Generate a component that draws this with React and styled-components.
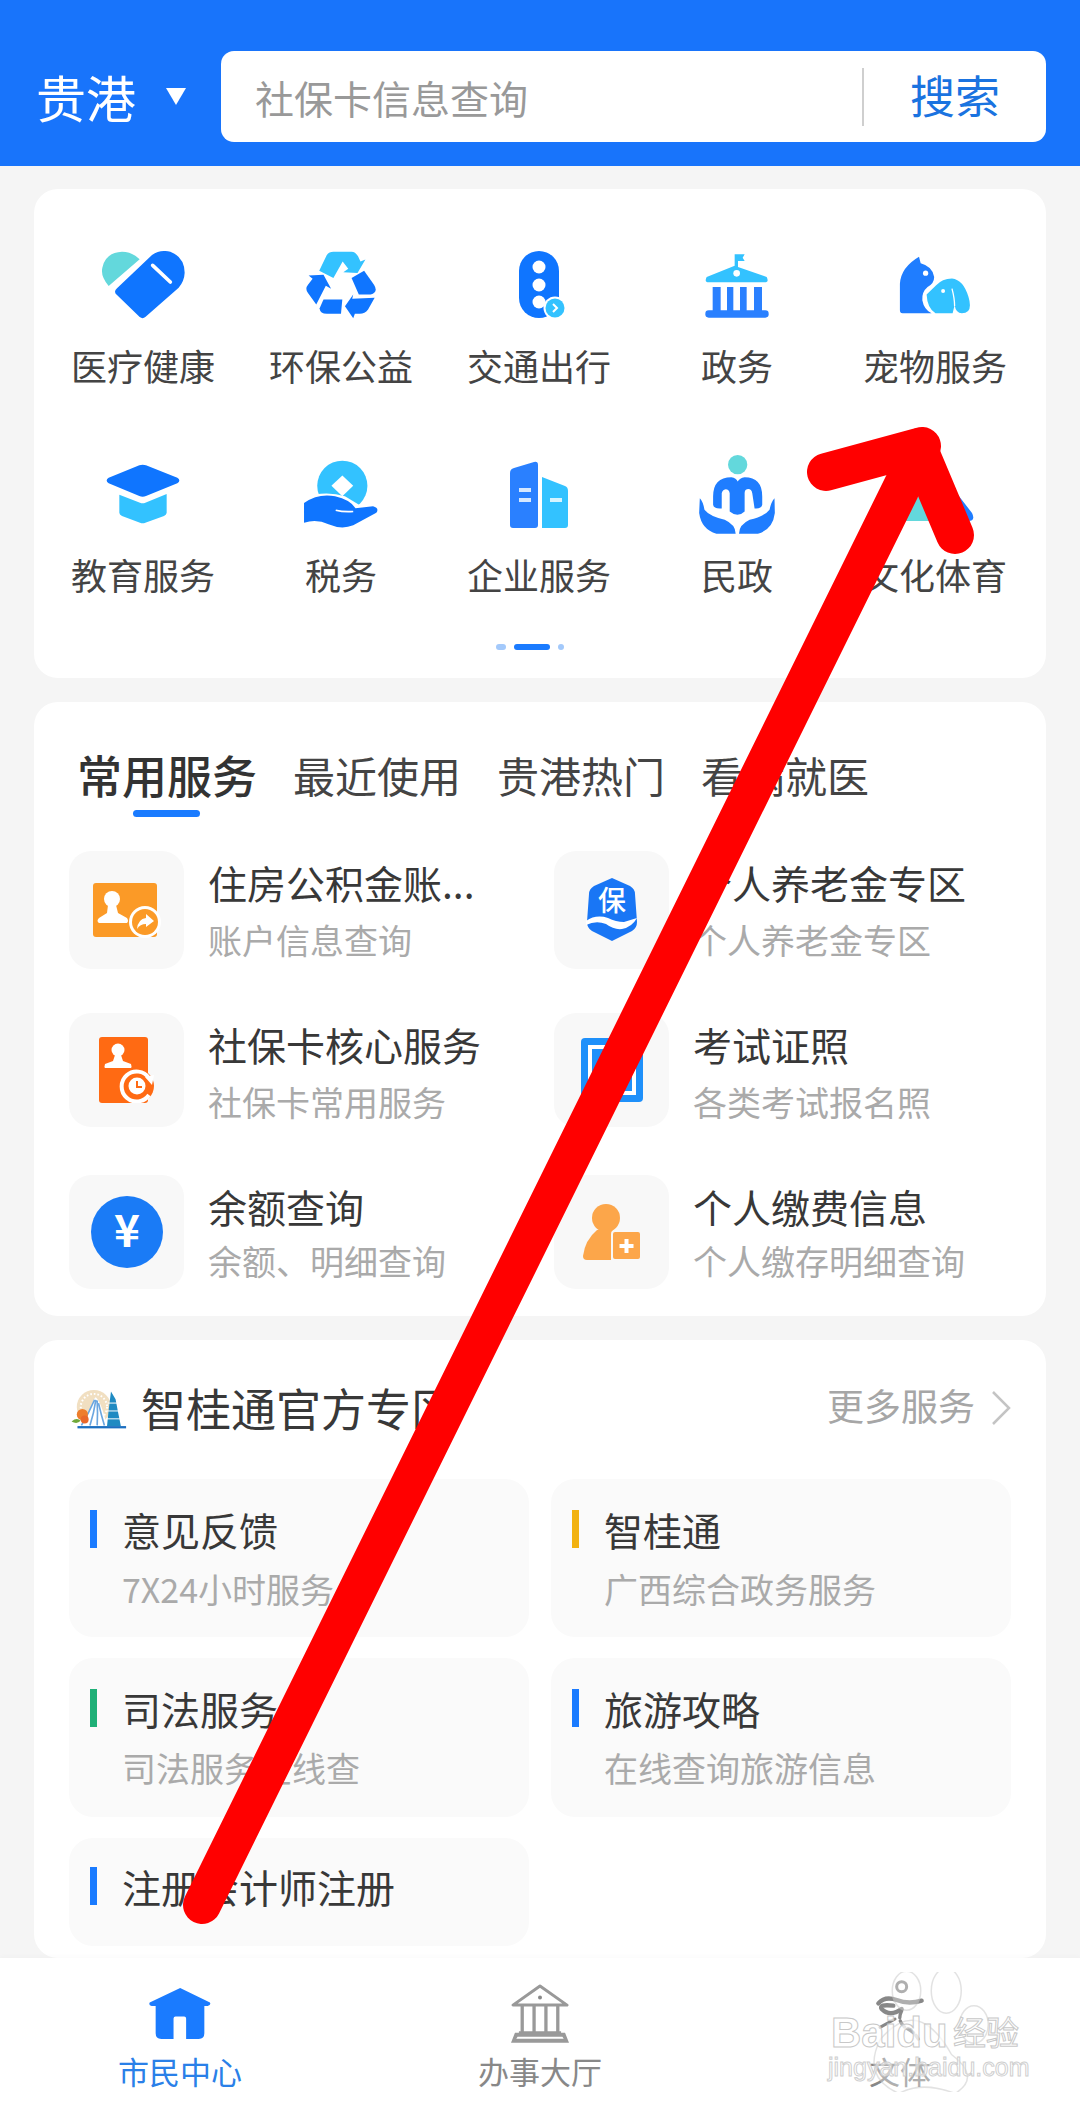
import React from 'react'
import styled, { createGlobalStyle } from 'styled-components'

const FONT = '"Noto Sans CJK SC", "Noto Sans", sans-serif'
const BLUE = '#0f75ff'
const SKY = '#33c2ff'
const TEAL = '#63d8dc'

const GlobalStyle = createGlobalStyle`
  html, body { margin: 0; padding: 0; background: #f5f5f5; }
  body { font-family: ${FONT}; }
  * { box-sizing: border-box; }
`

const HeartIcon = () => (
  <svg width="84" height="68" viewBox="142 60 252 204">
    <path fill={TEAL} d="M165 165 Q140 135 146 110 Q155 65 205 62 Q235 62 258 85 Z" />
    <path fill={BLUE} d="M190 172 L295 72 Q320 55 350 62 Q392 78 393 125 Q392 150 375 170 L275 258 Q267 265 258 258 L190 192 Q178 182 190 172 Z" />
    <path stroke="#fff" strokeWidth="11" strokeLinecap="round" d="M297 103 L350 153" />
  </svg>
)

const RecycleIcon = () => (
  <svg width="72" height="68" viewBox="760 58 216 206">
    <path fill={SKY} d="M802 118 L825 70 Q832 60 845 60 L900 60 Q912 60 920 75 L927 90 L942 84 L918 125 L875 122 L890 112 L873 90 L845 140 Z" />
    <path fill={BLUE} d="M770 132 L815 130 L838 172 L822 163 L793 220 L768 185 Q758 172 768 160 L782 142 Z" />
    <path fill={BLUE} d="M938 118 L968 160 Q982 182 958 190 L922 190 L900 140 Z" />
    <path fill={BLUE} d="M815 205 L872 205 L868 248 L825 248 Q805 248 803 232 Z" />
    <path fill={BLUE} d="M905 190 L902 203 L970 200 L950 235 Q940 248 925 248 L910 248 L905 262 L880 225 Z" />
  </svg>
)

const TrafficIcon = () => (
  <svg width="56" height="68" viewBox="0 0 56 68">
    <rect x="8" y="0" width="40" height="67" rx="20" fill={BLUE} />
    <circle cx="28" cy="16" r="6.5" fill="#fff" />
    <circle cx="28" cy="34" r="6.5" fill="#fff" />
    <circle cx="28" cy="51" r="6.5" fill="#fff" />
    <circle cx="44" cy="57" r="11.5" fill="#fff" />
    <circle cx="44" cy="57" r="9.5" fill={SKY} />
    <path d="M42 53 L46 57 L42 61" fill="none" stroke="#fff" strokeWidth="2" />
  </svg>
)

const GovIcon = () => (
  <svg width="64" height="65" viewBox="138 66 190 195">
    <path fill={SKY} d="M226 70 L256 70 L250 80 L256 90 L236 90 L236 108 L322 138 Q330 154 316 154 L148 154 Q134 154 142 138 L226 104 Z" />
    <circle cx="232" cy="127" r="10" fill="#fff" />
    <path fill="#2a80ff" d="M160 168 H184 V240 H160 Z M203 168 H222 V240 H203 Z M242 168 H262 V240 H242 Z M284 168 H308 V240 H284 Z" />
    <rect x="138" y="238" width="190" height="22" rx="10" fill="#2a80ff" />
  </svg>
)

const PetIcon = () => (
  <svg width="73" height="58" viewBox="720 66 220 176">
    <path fill="#1f7dff" d="M780 68 L785 88 Q822 98 826 130 Q826 150 806 160 Q788 175 790 200 Q795 228 818 240 L730 240 Q722 240 722 230 L722 150 Q725 100 780 68 Z" />
    <circle cx="800" cy="118" r="8" fill="#fff" />
    <path fill={SKY} d="M803 183 L832 155 Q850 134 880 134 Q915 138 930 190 Q945 240 910 240 Q892 240 888 215 L882 240 L830 240 Q805 225 803 183 Z" />
    <circle cx="853" cy="172" r="6" fill="#fff" />
    <path stroke="#fff" strokeWidth="4" fill="none" d="M880 165 Q888 195 888 218" />
  </svg>
)

const EduIcon = () => (
  <svg width="74" height="60" viewBox="160 64 222 180">
    <path fill={SKY} d="M200 156 L262 180 Q270 183 278 180 L342 154 L342 210 Q342 216 334 220 L278 240 Q270 244 262 240 L208 220 Q200 216 200 210 Z" />
    <path fill={BLUE} d="M260 68 Q270 64 280 68 L374 105 Q386 113 374 122 L280 160 Q270 164 260 160 L168 122 Q156 113 168 105 Z" />
  </svg>
)

const TaxIcon = () => (
  <svg width="76" height="68" viewBox="754 50 228 206">
    <circle cx="872" cy="128" r="76" fill={SKY} />
    <path fill="#fff" d="M872 97 L905 128 L872 160 L839 128 Z" />
    <path fill="#fff" d="M745 165 Q820 140 880 160 L930 190 L960 260 L745 260 Z" />
    <path fill={BLUE} d="M756 180 Q800 150 850 160 Q895 170 912 196 L965 190 Q985 195 975 210 L905 248 Q870 262 830 245 Q795 228 756 240 Z" />
    <path fill="none" stroke="#fff" strokeWidth="5" d="M852 202 Q875 208 905 206" />
  </svg>
)

const BuildingIcon = () => (
  <svg width="58" height="67" viewBox="0 0 58 67">
    <path fill="#2a80ff" d="M0 12 Q0 8 4 7 L24 1 Q28 0 28 4 L28 64 Q28 67 25 67 L3 67 Q0 67 0 64 Z" />
    <path fill={SKY} d="M32 16 L55 25 Q58 26 58 30 L58 64 Q58 67 55 67 L32 67 Z" />
    <rect x="9" y="27" width="12" height="4" fill="#d6e8ff" />
    <rect x="9" y="37" width="12" height="4" fill="#d6e8ff" />
    <rect x="40" y="37" width="12" height="4" fill="#d6f4ff" />
  </svg>
)

const CivilIcon = () => (
  <svg width="76" height="79" viewBox="118 665 228 238">
    <circle cx="234" cy="694" r="29" fill={TEAL} />
    <path fill="#1f7dff" d="M160 790 Q160 732 215 732 Q230 734 234 745 Q240 734 255 732 Q308 732 308 790 L308 815 Q305 828 285 826 L278 780 Q275 765 262 768 Q255 770 255 780 L255 835 Q234 855 210 835 L210 780 Q208 768 198 768 Q188 770 186 780 L186 826 Q162 828 160 815 Z" />
    <path fill="#1f7dff" d="M120 795 Q130 805 134 830 Q150 850 195 860 Q228 875 228 902 L170 902 Q125 890 118 840 Z" />
    <path fill="#1f7dff" d="M345 795 Q335 805 330 830 Q315 850 270 860 Q238 875 238 902 L295 902 Q340 890 346 840 Z" />
  </svg>
)

const CultureIcon = () => (
  <svg width="78" height="58" viewBox="0 0 78 58">
    <path fill={TEAL} d="M30 20 L46 56 L6 56 Z" />
    <path fill="#1f7dff" d="M30 4 Q36 -2 42 4 L76 48 Q80 56 72 56 L38 56 L48 46 L26 12 Z" />
  </svg>
)

const FundIcon = () => (
  <svg width="68" height="55" viewBox="0 0 68 55">
    <rect x="0" y="0" width="64" height="54" rx="3" fill="#fb9a27" />
    <circle cx="19" cy="16" r="8" fill="#fff" />
    <path fill="#fff" d="M15 22 H23 L25 30 L34 35 Q36 38 34 40 H6 Q3 38 6 35 L14 30 Z" />
    <circle cx="52" cy="39" r="16" fill="#fff" />
    <circle cx="52" cy="39" r="13" fill="#fb9a27" />
    <path fill="#fff" d="M53 31 L61 38 L53 44 V41 Q47 41 44 46 Q45 36 53 35 Z" />
  </svg>
)

const PensionIcon = () => (
  <svg width="52" height="64" viewBox="0 0 52 64">
    <path fill="#1976f5" d="M26 0 L44 8 Q49 11 49 16 L51 44 Q51 50 46 53 L26 63 L6 53 Q1 50 1 44 L3 16 Q3 11 8 8 Z" />
    <text x="26" y="33" textAnchor="middle" fontSize="28" fontWeight="500" fill="#fff" fontFamily={FONT}>保</text>
    <path fill="#fff" d="M0 43 Q10 36 22 40 Q30 44 38 44 L51 40 Q46 49 36 51 Q28 52 20 46 Q10 42 0 47 Z" />
  </svg>
)

const CardIcon = () => (
  <svg width="56" height="66" viewBox="0 0 56 66">
    <rect x="0" y="0" width="49" height="66" rx="3" fill="#ff6a13" />
    <circle cx="19" cy="13" r="6.5" fill="#fff" />
    <path fill="#fff" d="M16 18 H22 L24 24 L32 27 Q33 30 32 31 H6 Q5 30 6 27 L14 24 Z" />
    <circle cx="38" cy="49" r="17" fill="#ff6a13" />
    <path fill="none" stroke="#fff" strokeWidth="4" d="M50 41 A15 15 0 1 0 50 58" />
    <circle cx="38" cy="49" r="8.5" fill="#fff" />
    <path fill="none" stroke="#ff6a13" strokeWidth="2" d="M38 44 V50 H43" />
    <path fill="#fff" d="M46 40 L55 38 L53 48 Z" />
  </svg>
)

const ExamIcon = () => (
  <svg width="62" height="64" viewBox="0 0 62 64">
    <rect x="0" y="0" width="62" height="64" rx="4" fill="#1e90fa" />
    <rect x="9" y="9" width="44" height="46" fill="none" stroke="#fff" strokeWidth="4" />
  </svg>
)

const YenIcon = () => (
  <svg width="72" height="76" viewBox="0 0 72 76">
    <circle cx="36" cy="38" r="36" fill="#1a7bf6" />
    <text x="36" y="53" textAnchor="middle" fontSize="44" fontWeight="700" fill="#fff" fontFamily={FONT}>¥</text>
  </svg>
)

const PayIcon = () => (
  <svg width="58" height="57" viewBox="0 0 58 57">
    <circle cx="23" cy="14" r="14" fill="#fca64a" />
    <path fill="#fca64a" d="M14 26 H30 L28 56 H4 Q0 56 0 52 Q2 36 14 26 Z" />
    <rect x="29" y="27" width="29" height="29" rx="3" fill="#fca64a" stroke="#f8f8f8" strokeWidth="2" />
    <path stroke="#fff" strokeWidth="4" d="M43.5 35 V49 M36.5 42 H50.5" />
  </svg>
)

const SpotLogo = () => (
  <svg width="58" height="46" viewBox="25 25 175 140">
    <circle cx="100" cy="92" r="52" fill="#f1dfc1" />
    <circle cx="100" cy="92" r="40" fill="none" stroke="#fff" strokeWidth="6" strokeDasharray="5 6" />
    <path fill="#fff" d="M70 150 Q100 60 106 62 Q124 80 140 150 Z" />
    <path fill="none" stroke="#6ba6e0" strokeWidth="5" d="M102 70 Q85 110 62 148 M106 70 Q100 110 88 148 M110 72 Q112 110 110 148 M114 80 Q122 115 132 148" />
    <path fill="#1f8ac2" d="M152 45 L166 68 L174 110 L182 150 L140 150 L145 100 Z" />
    <path stroke="#fff" strokeWidth="3" d="M142 80 H172 M140 104 H176 M138 128 H180" />
    <rect x="50" y="150" width="148" height="7" fill="#1c6fc0" />
    <circle cx="65" cy="115" r="17" fill="#ee7d2c" />
    <circle cx="72" cy="130" r="12" fill="#e9682a" />
    <path fill="#70a83a" d="M32 136 Q48 122 60 134 Q48 146 32 136 Z" />
  </svg>
)

const HomeIcon = () => (
  <svg width="62" height="51" viewBox="28 38 187 154">
    <path fill="#1a7bff" d="M122 38 L212 82 Q216 90 205 92 L195 92 L195 175 Q195 192 178 192 L140 192 L140 130 Q140 124 134 124 L108 124 Q102 124 102 130 L102 192 L65 192 Q48 192 48 175 L48 92 L36 92 Q26 90 30 82 Z" />
  </svg>
)

const HallIcon = () => (
  <svg width="58" height="59" viewBox="1112 25 176 177">
    <path fill="none" stroke="#999" strokeWidth="9" strokeLinejoin="round" d="M1200 30 L1282 88 H1118 Z" />
    <circle cx="1200" cy="65" r="6" fill="#888" />
    <path fill="none" stroke="#999" strokeWidth="10" d="M1146 88 V172 M1182 88 V172 M1218 88 V172 M1254 88 V172 M1136 172 H1264" />
    <path fill="#999" d="M1124 172 H1276 L1288 202 H1112 Z M1132 184 L1128 190 H1272 L1268 184 Z" fillRule="evenodd" />
  </svg>
)

const RunnerIcon = () => (
  <svg width="50" height="68" viewBox="160 35 150 204">
    <circle cx="240" cy="58" r="15" fill="none" stroke="#888" strokeWidth="9" />
    <path fill="none" stroke="#888" strokeWidth="13" strokeLinecap="round" d="M170 108 Q190 85 225 98 Q260 112 300 100" />
    <path fill="none" stroke="#888" strokeWidth="13" strokeLinecap="round" d="M215 115 Q170 110 180 125 Q205 150 240 125" />
    <path fill="none" stroke="#888" strokeWidth="10" strokeLinecap="round" strokeDasharray="22 10" d="M240 130 Q225 160 250 180 Q280 195 290 215" />
    <path fill="none" stroke="#888" strokeWidth="9" strokeLinecap="round" d="M220 155 L175 180" />
  </svg>
)

const Paw = () => (
  <svg width="130" height="120" viewBox="230 60 170 160">
    <g fill="rgba(255,255,255,.6)" stroke="#ccc" strokeWidth="2">
      <ellipse cx="285" cy="85" rx="19" ry="26" />
      <ellipse cx="338" cy="85" rx="20" ry="30" />
      <ellipse cx="375" cy="130" rx="19" ry="25" />
      <path d="M250 150 Q300 90 345 170 Q385 200 350 222 Q305 205 275 222 Q225 200 250 150 Z" />
    </g>
  </svg>
)

const topServices = [
  { label: '医疗健康', icon: <HeartIcon /> },
  { label: '环保公益', icon: <RecycleIcon /> },
  { label: '交通出行', icon: <TrafficIcon /> },
  { label: '政务', icon: <GovIcon /> },
  { label: '宠物服务', icon: <PetIcon /> },
  { label: '教育服务', icon: <EduIcon /> },
  { label: '税务', icon: <TaxIcon /> },
  { label: '企业服务', icon: <BuildingIcon /> },
  { label: '民政', icon: <CivilIcon /> },
  { label: '文化体育', icon: <CultureIcon /> },
]

const commonServices = [
  { title: '住房公积金账...', sub: '账户信息查询', icon: <FundIcon />, tall: true },
  { title: '个人养老金专区', sub: '个人养老金专区', icon: <PensionIcon />, tall: true },
  { title: '社保卡核心服务', sub: '社保卡常用服务', icon: <CardIcon /> },
  { title: '考试证照', sub: '各类考试报名照', icon: <ExamIcon /> },
  { title: '余额查询', sub: '余额、明细查询', icon: <YenIcon />, tight: true },
  { title: '个人缴费信息', sub: '个人缴存明细查询', icon: <PayIcon />, tight: true },
]

const zoneItems = [
  { title: '意见反馈', sub: '7X24小时服务', bar: '#1a7bff' },
  { title: '智桂通', sub: '广西综合政务服务', bar: '#f2b211' },
  { title: '司法服务', sub: '司法服务在线查', bar: '#1fb077' },
  { title: '旅游攻略', sub: '在线查询旅游信息', bar: '#1a7bff' },
  { title: '注册会计师注册', bar: '#1a7bff' },
]

const navItems = [
  { label: '市民中心', icon: <HomeIcon />, active: true },
  { label: '办事大厅', icon: <HallIcon /> },
  { label: '文体', icon: <RunnerIcon /> },
]

export default function App() {
  return (
    <Page>
      <GlobalStyle />
      <Header>
        <City>贵港</City>
        <Caret />
        <SearchBox>
          <Placeholder>社保卡信息查询</Placeholder>
          <SearchButton>搜索</SearchButton>
        </SearchBox>
      </Header>

      <Main>
        <TopCard>
          <TopGrid>
            {topServices.map((item) => (
              <TopItem key={item.label}>
                <TopIconSlot>{item.icon}</TopIconSlot>
                <TopLabel>{item.label}</TopLabel>
              </TopItem>
            ))}
          </TopGrid>
          <Dots>
            <Dot />
            <Dot $active />
            <Dot $thin />
          </Dots>
        </TopCard>

        <CommonCard>
          <Tabs>
            <Tab $active>常用服务</Tab>
            <Tab>最近使用</Tab>
            <Tab>贵港热门</Tab>
            <Tab>看病就医</Tab>
          </Tabs>
          <CommonGrid>
            {commonServices.map((item) => (
              <CommonRow key={item.title}>
                <IconTile $tall={item.tall}>{item.icon}</IconTile>
                <CommonText $tight={item.tight}>
                  <CommonTitle>{item.title}</CommonTitle>
                  <CommonSub>{item.sub}</CommonSub>
                </CommonText>
              </CommonRow>
            ))}
          </CommonGrid>
        </CommonCard>

        <ZoneCard>
          <ZoneHead>
            <SpotLogo />
            <ZoneTitle>智桂通官方专区</ZoneTitle>
            <More>更多服务</More>
            <Chevron viewBox="0 0 20 34" width="20" height="34">
              <path d="M2 1 L18 17 L2 33" fill="none" stroke="#c4c4c4" strokeWidth="2.5" />
            </Chevron>
          </ZoneHead>
          <ZoneGrid>
            {zoneItems.map((item) => (
              <ZoneTile key={item.title} $short={!item.sub}>
                <ZoneTitleRow>
                  <ZoneBar $color={item.bar} />
                  <ZoneName>{item.title}</ZoneName>
                </ZoneTitleRow>
                {item.sub && <ZoneSub>{item.sub}</ZoneSub>}
              </ZoneTile>
            ))}
          </ZoneGrid>
        </ZoneCard>
      </Main>

      <BottomNav>
        {navItems.map((item) => (
          <NavItem key={item.label}>
            <NavIcon>{item.icon}</NavIcon>
            <NavLabel $active={item.active}>{item.label}</NavLabel>
          </NavItem>
        ))}
        <Watermark>
          <PawSlot><Paw /></PawSlot>
          <WmBrand>Baidu</WmBrand>
          <WmCn>经验</WmCn>
          <WmUrl>jingyan.baidu.com</WmUrl>
        </Watermark>
      </BottomNav>

      <ArrowLayer viewBox="0 0 1080 2102" width="1080" height="2102">
        <g fill="none" stroke="#ff0000" strokeLinecap="round" strokeLinejoin="round">
          <path strokeWidth="38" d="M202 1905 L922 446" />
          <path strokeWidth="38" d="M826 472 L918 447 L955 535" />
        </g>
      </ArrowLayer>
    </Page>
  )
}

const Page = styled.div`
  position: relative;
  width: 1080px;
  height: 2102px;
  display: flex;
  flex-direction: column;
  overflow: hidden;
  background: #f5f5f5;
  font-family: ${FONT};
`

const Header = styled.header`
  flex: none;
  height: 166px;
  padding: 51px 34px 24px 36px;
  display: flex;
  align-items: center;
  background: #1874fb;
`

const City = styled.div`
  font-size: 50px;
  line-height: 91px;
  color: #fff;
`

const Caret = styled.div`
  width: 0;
  height: 0;
  margin: 0 35px 0 30px;
  border-left: 10px solid transparent;
  border-right: 10px solid transparent;
  border-top: 17px solid #fff;
`

const SearchBox = styled.div`
  flex: 1;
  height: 91px;
  display: flex;
  align-items: center;
  background: #fff;
  border-radius: 13px;
`

const Placeholder = styled.div`
  flex: 1;
  padding-left: 34px;
  font-size: 39px;
  color: #999;
`

const SearchButton = styled.div`
  width: 184px;
  height: 58px;
  padding-left: 46px;
  border-left: 2px solid #cfcfcf;
  font-size: 45px;
  line-height: 54px;
  color: #1a73e0;
`

const Main = styled.main`
  flex: 1;
  min-height: 0;
  padding: 23px 34px 0;
  display: flex;
  flex-direction: column;
  gap: 24px;
  overflow: hidden;
`

const Card = styled.section`
  flex: none;
  background: #fff;
  border-radius: 24px;
`

const TopCard = styled(Card)`
  height: 489px;
  padding: 51px 10px 0;
`

const TopGrid = styled.div`
  display: grid;
  grid-template-columns: repeat(5, 198px);
  grid-auto-rows: 150px;
  row-gap: 59px;
`

const TopItem = styled.div`
  display: flex;
  flex-direction: column;
  align-items: center;
`

const TopIconSlot = styled.div`
  height: 90px;
  display: flex;
  align-items: center;
  justify-content: center;
`

const TopLabel = styled.div`
  margin-top: 10px;
  font-size: 36px;
  line-height: 50px;
  color: #444;
  white-space: nowrap;
`

const Dots = styled.div`
  margin-top: 45px;
  display: flex;
  justify-content: center;
  gap: 8px;
  padding-right: 30px;
  padding-left: 0;
  transform: translateX(5px);
`

const Dot = styled.span`
  height: 6px;
  width: ${(p) => (p.$active ? '36px' : p.$thin ? '6px' : '10px')};
  border-radius: 3px;
  background: ${(p) => (p.$active ? '#1a7bff' : '#a3c9fb')};
`

const CommonCard = styled(Card)`
  height: 614px;
  padding: 46px 35px 0;
`

const Tabs = styled.div`
  padding-left: 8px;
  display: flex;
  align-items: center;
  gap: 36px;
  height: 54px;
`

const Tab = styled.div`
  position: relative;
  font-size: ${(p) => (p.$active ? '45px' : '42px')};
  font-weight: ${(p) => (p.$active ? 500 : 400)};
  line-height: 54px;
  color: ${(p) => (p.$active ? '#333' : '#444')};

  &::after {
    content: '';
    display: ${(p) => (p.$active ? 'block' : 'none')};
    position: absolute;
    left: 56px;
    bottom: -15px;
    width: 67px;
    height: 7px;
    border-radius: 4px;
    background: #1a7bff;
  }
`

const CommonGrid = styled.div`
  margin-top: 49px;
  display: grid;
  grid-template-columns: 485px 1fr;
  grid-auto-rows: 114px;
  row-gap: 48px;
`

const CommonRow = styled.div`
  display: flex;
  align-items: flex-start;
  gap: 24px;
`

const IconTile = styled.div`
  flex: none;
  width: 115px;
  height: ${(p) => (p.$tall ? '118px' : '114px')};
  display: flex;
  align-items: center;
  justify-content: center;
  background: #f8f8f8;
  border-radius: 22px;
`

const CommonText = styled.div`
  padding-top: 6px;
  display: flex;
  flex-direction: column;
  gap: ${(p) => (p.$tight ? '7px' : '10px')};
`

const CommonTitle = styled.div`
  font-size: 39px;
  line-height: 50px;
  color: #383838;
  white-space: nowrap;
`

const CommonSub = styled.div`
  font-size: 34px;
  line-height: 46px;
  color: #aaa;
  white-space: nowrap;
`

const ZoneCard = styled(Card)`
  flex: 1 0 auto;
  padding: 40px 35px 0;
`

const ZoneHead = styled.div`
  height: 56px;
  display: flex;
  align-items: center;
`

const ZoneTitle = styled.div`
  flex: 1;
  margin-left: 14px;
  font-size: 45px;
  line-height: 56px;
  color: #383838;
`

const More = styled.div`
  font-size: 37px;
  line-height: 50px;
  color: #a6a6a6;
  margin-top: -6px;
`

const Chevron = styled.svg`
  margin-left: 16px;
`

const ZoneGrid = styled.div`
  margin-top: 43px;
  display: grid;
  grid-template-columns: 460px 460px;
  grid-template-rows: 158px 159px 108px;
  gap: 21px 22px;
`

const ZoneTile = styled.div`
  padding: ${(p) => (p.$short ? '23px' : '25px')} 20px 0 21px;
  background: #fafafa;
  border-radius: 24px;
`

const ZoneTitleRow = styled.div`
  display: flex;
  align-items: center;
  gap: 25px;
  height: 50px;
`

const ZoneBar = styled.span`
  flex: none;
  width: 7px;
  height: 38px;
  background: ${(p) => p.$color};
`

const ZoneName = styled.div`
  font-size: 39px;
  line-height: 50px;
  color: #383838;
  white-space: nowrap;
`

const ZoneSub = styled.div`
  margin: 12px 0 0 32px;
  font-size: 34px;
  line-height: 46px;
  color: #aaa;
  white-space: nowrap;
`

const BottomNav = styled.nav`
  position: relative;
  flex: none;
  height: 144px;
  display: grid;
  grid-template-columns: repeat(3, 360px);
  background: #fff;
  box-shadow: 0 -2px 4px rgba(0, 0, 0, 0.02);
`

const NavItem = styled.div`
  display: flex;
  flex-direction: column;
  align-items: center;
  padding-top: 24px;
`

const NavIcon = styled.div`
  height: 62px;
  display: flex;
  align-items: center;
  justify-content: center;
`

const NavLabel = styled.div`
  margin-top: 5px;
  font-size: 31px;
  line-height: 44px;
  color: ${(p) => (p.$active ? '#2a80e8' : '#888')};
`

const Watermark = styled.div`
  position: absolute;
  left: 826px;
  top: 14px;
  width: 200px;
  height: 110px;
  font-family: "Liberation Sans", sans-serif;
`

const PawSlot = styled.div`
  position: absolute;
  left: 38px;
  top: 0;
  opacity: 0.55;
`

const WmBrand = styled.div`
  position: absolute;
  left: 5px;
  top: 38px;
  font-size: 42px;
  line-height: 46px;
  font-weight: 700;
  color: rgba(255, 255, 255, 0.7);
  -webkit-text-stroke: 1px #c8c8c8;
`

const WmCn = styled.div`
  position: absolute;
  left: 127px;
  top: 36px;
  font-family: ${FONT};
  font-size: 33px;
  line-height: 46px;
  color: rgba(255, 255, 255, 0.7);
  -webkit-text-stroke: 1px #c8c8c8;
`

const WmUrl = styled.div`
  position: absolute;
  left: 2px;
  top: 80px;
  font-size: 25px;
  line-height: 30px;
  white-space: nowrap;
  color: rgba(255, 255, 255, 0.5);
  -webkit-text-stroke: 1px #cfcfcf;
`

const ArrowLayer = styled.svg`
  position: absolute;
  left: 0;
  top: 0;
  pointer-events: none;
`
